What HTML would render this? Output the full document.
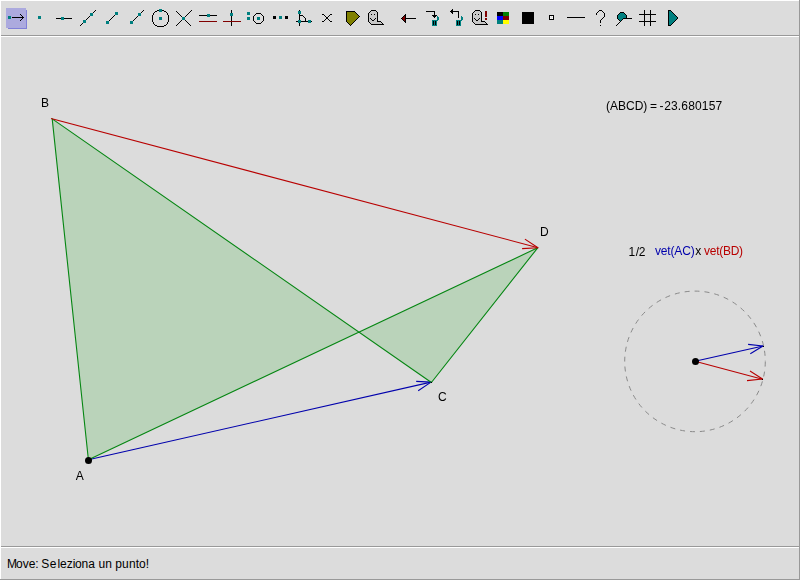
<!DOCTYPE html>
<html><head><meta charset="utf-8">
<style>
html,body{margin:0;padding:0;}
body{width:800px;height:580px;overflow:hidden;background:#dcdcdc;font-family:"Liberation Sans",sans-serif;font-size:12px;color:#000;position:relative;}
#frame{position:absolute;left:0;top:0;width:800px;height:580px;}
svg text{font-family:"Liberation Sans",sans-serif;font-size:12px;}
</style></head><body>
<svg id="frame" width="800" height="580" viewBox="0 0 800 580">
<rect x="0" y="0" width="800" height="580" fill="#dcdcdc"/>
<!-- borders -->
<g shape-rendering="crispEdges">
<rect x="0" y="0" width="799" height="1" fill="#fff"/>
<rect x="0" y="0" width="1" height="579" fill="#fff"/>
<rect x="799" y="0" width="1" height="580" fill="#999"/>
<rect x="0" y="579" width="800" height="1" fill="#999"/>
<rect x="1" y="35" width="798" height="1" fill="#999"/>
<rect x="1" y="36" width="798" height="1" fill="#fff"/>
<rect x="1" y="546" width="798" height="1" fill="#999"/>
<rect x="1" y="547" width="798" height="1" fill="#fff"/>
</g>
<!-- toolbar icons -->
<g id="toolbar" shape-rendering="crispEdges">
<rect x="8" y="10" width="19" height="19" fill="#8080d8"/><rect x="6" y="8" width="20" height="20" fill="#acaade"/>
<rect x="8" y="16" width="3" height="3" fill="#008080"/><rect x="12" y="17" width="12" height="1" fill="#000"/><rect x="20" y="14" width="1" height="1" fill="#000"/><rect x="21" y="15" width="1" height="1" fill="#000"/><rect x="22" y="16" width="1" height="1" fill="#000"/><rect x="22" y="18" width="1" height="1" fill="#000"/><rect x="21" y="19" width="1" height="1" fill="#000"/><rect x="20" y="20" width="1" height="1" fill="#000"/>
<rect x="38" y="16" width="3" height="3" fill="#008080"/>
<rect x="56" y="18" width="16" height="1" fill="#000"/><rect x="61" y="17" width="3" height="3" fill="#008080"/>
<line x1="80" y1="26" x2="96" y2="10" stroke="#000" stroke-width="1"/><rect x="83" y="20" width="3" height="3" fill="#008080"/><rect x="90" y="13" width="3" height="3" fill="#008080"/>
<line x1="107.5" y1="22.5" x2="116.5" y2="13.5" stroke="#000" stroke-width="1"/><rect x="106" y="21" width="3" height="3" fill="#008080"/><rect x="115" y="12" width="3" height="3" fill="#008080"/>
<line x1="131.5" y1="22.5" x2="144" y2="10" stroke="#000" stroke-width="1"/><rect x="130" y="21" width="3" height="3" fill="#008080"/><rect x="138" y="13" width="3" height="3" fill="#008080"/>
<rect x="152" y="15" width="1" height="1" fill="#000"/><rect x="152" y="16" width="1" height="1" fill="#000"/><rect x="152" y="17" width="1" height="1" fill="#000"/><rect x="152" y="18" width="1" height="1" fill="#000"/><rect x="152" y="19" width="1" height="1" fill="#000"/><rect x="152" y="20" width="1" height="1" fill="#000"/><rect x="152" y="21" width="1" height="1" fill="#000"/><rect x="153" y="13" width="1" height="1" fill="#000"/><rect x="153" y="14" width="1" height="1" fill="#000"/><rect x="153" y="22" width="1" height="1" fill="#000"/><rect x="153" y="23" width="1" height="1" fill="#000"/><rect x="154" y="12" width="1" height="1" fill="#000"/><rect x="154" y="24" width="1" height="1" fill="#000"/><rect x="155" y="11" width="1" height="1" fill="#000"/><rect x="155" y="25" width="1" height="1" fill="#000"/><rect x="156" y="11" width="1" height="1" fill="#000"/><rect x="156" y="25" width="1" height="1" fill="#000"/><rect x="157" y="10" width="1" height="1" fill="#000"/><rect x="157" y="26" width="1" height="1" fill="#000"/><rect x="158" y="10" width="1" height="1" fill="#000"/><rect x="158" y="26" width="1" height="1" fill="#000"/><rect x="159" y="10" width="1" height="1" fill="#000"/><rect x="159" y="26" width="1" height="1" fill="#000"/><rect x="160" y="10" width="1" height="1" fill="#000"/><rect x="160" y="26" width="1" height="1" fill="#000"/><rect x="161" y="10" width="1" height="1" fill="#000"/><rect x="161" y="26" width="1" height="1" fill="#000"/><rect x="162" y="10" width="1" height="1" fill="#000"/><rect x="162" y="26" width="1" height="1" fill="#000"/><rect x="163" y="10" width="1" height="1" fill="#000"/><rect x="163" y="26" width="1" height="1" fill="#000"/><rect x="164" y="11" width="1" height="1" fill="#000"/><rect x="164" y="25" width="1" height="1" fill="#000"/><rect x="165" y="11" width="1" height="1" fill="#000"/><rect x="165" y="25" width="1" height="1" fill="#000"/><rect x="166" y="12" width="1" height="1" fill="#000"/><rect x="166" y="24" width="1" height="1" fill="#000"/><rect x="167" y="13" width="1" height="1" fill="#000"/><rect x="167" y="14" width="1" height="1" fill="#000"/><rect x="167" y="22" width="1" height="1" fill="#000"/><rect x="167" y="23" width="1" height="1" fill="#000"/><rect x="168" y="15" width="1" height="1" fill="#000"/><rect x="168" y="16" width="1" height="1" fill="#000"/><rect x="168" y="17" width="1" height="1" fill="#000"/><rect x="168" y="18" width="1" height="1" fill="#000"/><rect x="168" y="19" width="1" height="1" fill="#000"/><rect x="168" y="20" width="1" height="1" fill="#000"/><rect x="168" y="21" width="1" height="1" fill="#000"/><rect x="159" y="9" width="3" height="3" fill="#008080"/><rect x="159" y="17" width="3" height="3" fill="#008080"/>
<line x1="176" y1="11" x2="191" y2="26" stroke="#000" stroke-width="1"/><line x1="176" y1="26" x2="192" y2="10" stroke="#000" stroke-width="1"/><rect x="182" y="17" width="3" height="3" fill="#008080"/>
<rect x="199" y="15" width="18" height="1" fill="#000"/><rect x="207" y="14" width="3" height="3" fill="#008080"/><rect x="199" y="21" width="18" height="1" fill="#800000"/>
<rect x="231" y="10" width="1" height="16" fill="#000"/><rect x="230" y="13" width="3" height="3" fill="#008080"/><rect x="223" y="21" width="18" height="1" fill="#800000"/>
<rect x="247" y="12" width="3" height="3" fill="#008080"/><rect x="247" y="17" width="3" height="3" fill="#008080"/><rect x="253" y="16" width="1" height="1" fill="#000"/><rect x="253" y="17" width="1" height="1" fill="#000"/><rect x="253" y="18" width="1" height="1" fill="#000"/><rect x="253" y="19" width="1" height="1" fill="#000"/><rect x="253" y="20" width="1" height="1" fill="#000"/><rect x="254" y="15" width="1" height="1" fill="#000"/><rect x="254" y="21" width="1" height="1" fill="#000"/><rect x="255" y="14" width="1" height="1" fill="#000"/><rect x="255" y="22" width="1" height="1" fill="#000"/><rect x="256" y="13" width="1" height="1" fill="#000"/><rect x="256" y="23" width="1" height="1" fill="#000"/><rect x="257" y="13" width="1" height="1" fill="#000"/><rect x="257" y="23" width="1" height="1" fill="#000"/><rect x="258" y="13" width="1" height="1" fill="#000"/><rect x="258" y="23" width="1" height="1" fill="#000"/><rect x="259" y="13" width="1" height="1" fill="#000"/><rect x="259" y="23" width="1" height="1" fill="#000"/><rect x="260" y="13" width="1" height="1" fill="#000"/><rect x="260" y="23" width="1" height="1" fill="#000"/><rect x="261" y="14" width="1" height="1" fill="#000"/><rect x="261" y="22" width="1" height="1" fill="#000"/><rect x="262" y="15" width="1" height="1" fill="#000"/><rect x="262" y="21" width="1" height="1" fill="#000"/><rect x="263" y="16" width="1" height="1" fill="#000"/><rect x="263" y="17" width="1" height="1" fill="#000"/><rect x="263" y="18" width="1" height="1" fill="#000"/><rect x="263" y="19" width="1" height="1" fill="#000"/><rect x="263" y="20" width="1" height="1" fill="#000"/><rect x="257" y="17" width="3" height="3" fill="#008080"/>
<rect x="273" y="16" width="3" height="3" fill="#000"/><rect x="279" y="16" width="3" height="3" fill="#008080"/><rect x="285" y="16" width="3" height="3" fill="#000"/>
<rect x="299" y="10" width="1" height="16" fill="#000"/><rect x="296" y="21" width="16" height="1" fill="#000"/><rect x="300" y="15" width="1" height="1" fill="#000"/><rect x="301" y="15" width="1" height="1" fill="#000"/><rect x="302" y="15" width="1" height="1" fill="#000"/><rect x="303" y="16" width="1" height="1" fill="#000"/><rect x="304" y="17" width="1" height="1" fill="#000"/><rect x="305" y="18" width="1" height="1" fill="#000"/><rect x="305" y="19" width="1" height="1" fill="#000"/><rect x="305" y="20" width="1" height="1" fill="#000"/><rect x="298" y="11" width="3" height="3" fill="#008080"/><rect x="298" y="20" width="3" height="3" fill="#008080"/><rect x="308" y="20" width="3" height="3" fill="#008080"/>
<rect x="322" y="14" width="1" height="1" fill="#000"/><rect x="323" y="14" width="1" height="1" fill="#000"/><rect x="324" y="15" width="1" height="1" fill="#000"/><rect x="325" y="16" width="1" height="1" fill="#000"/><rect x="331" y="14" width="1" height="1" fill="#000"/><rect x="330" y="14" width="1" height="1" fill="#000"/><rect x="329" y="15" width="1" height="1" fill="#000"/><rect x="328" y="16" width="1" height="1" fill="#000"/><rect x="322" y="21" width="1" height="1" fill="#000"/><rect x="323" y="21" width="1" height="1" fill="#000"/><rect x="324" y="20" width="1" height="1" fill="#000"/><rect x="325" y="19" width="1" height="1" fill="#000"/><rect x="331" y="21" width="1" height="1" fill="#000"/><rect x="330" y="21" width="1" height="1" fill="#000"/><rect x="329" y="20" width="1" height="1" fill="#000"/><rect x="328" y="19" width="1" height="1" fill="#000"/><rect x="326" y="17" width="1" height="1" fill="#000"/><rect x="327" y="17" width="1" height="1" fill="#000"/><rect x="326" y="18" width="1" height="1" fill="#000"/><rect x="327" y="18" width="1" height="1" fill="#000"/>
<polygon points="346.5,11.5 354.5,11.5 359.5,16.5 350.5,25.5 346.5,21.5" fill="#808000" stroke="#000"/>
<g transform="translate(0,0)"><path d="M371.5,10.5 H375.5 L377.5,12.5 V21.5 H380.5 L383.5,24.5 H371.5 L368.5,21.5 V13.5 Z" fill="#c8c8c8" stroke="#000"/><rect x="371" y="14" width="1" height="1" fill="#000"/><rect x="374" y="14" width="1" height="1" fill="#000"/><path d="M370.5,18.5 L372.5,20.5 H373.5 L375.5,18.5" fill="none" stroke="#000"/></g>
<rect x="405" y="18" width="11" height="1" fill="#000"/><polygon points="401.5,18.5 405.5,14.5 405.5,22.5" fill="#800000" stroke="#000"/>
<rect x="426" y="11" width="9" height="1" fill="#000"/><rect x="434" y="11" width="1" height="5" fill="#000"/><polygon points="432,15 437,15 434.5,18" fill="#000"/><rect x="432" y="20" width="5" height="6" fill="#008080"/><rect x="433" y="21" width="1" height="4" fill="#000"/><rect x="435" y="21" width="1" height="4" fill="#000"/><path d="M437,16.5 Q439.5,18.2 437,20.5" fill="none" stroke="#008080" stroke-width="1.6"/>
<rect x="451" y="11" width="8" height="1" fill="#000"/><rect x="458" y="11" width="1" height="7" fill="#000"/><polygon points="453,9 453,14 450,11.5" fill="#000"/><rect x="456" y="20" width="5" height="6" fill="#008080"/><rect x="457" y="21" width="1" height="4" fill="#000"/><rect x="459" y="21" width="1" height="4" fill="#000"/><path d="M461,16.5 Q463.5,18.2 461,20.5" fill="none" stroke="#008080" stroke-width="1.6"/>
<g transform="translate(104,0)"><path d="M371.5,10.5 H375.5 L377.5,12.5 V21.5 H380.5 L383.5,24.5 H371.5 L368.5,21.5 V13.5 Z" fill="#c8c8c8" stroke="#000"/><rect x="371" y="14" width="1" height="1" fill="#000"/><rect x="374" y="14" width="1" height="1" fill="#000"/><path d="M370.5,18.5 L372.5,20.5 H373.5 L375.5,18.5" fill="none" stroke="#000"/></g><rect x="485" y="11" width="2" height="6" fill="#800000"/><rect x="485" y="18" width="2" height="2" fill="#800000"/>
<rect x="497" y="12" width="6" height="4" fill="#000"/><rect x="503" y="12" width="6" height="4" fill="#008000"/><rect x="497" y="16" width="6" height="4" fill="#0000ff"/><rect x="503" y="16" width="6" height="4" fill="#800000"/><rect x="497" y="20" width="6" height="4" fill="#008080"/><rect x="503" y="20" width="6" height="4" fill="#ffff00"/>
<rect x="522" y="12" width="12" height="12" fill="#000"/>
<rect x="549" y="15" width="5" height="5" fill="#000"/><rect x="550" y="16" width="3" height="3" fill="#e4e4e4"/><rect x="550" y="16" width="1" height="1" fill="#fff"/><rect x="552" y="16" width="1" height="1" fill="#fff"/><rect x="550" y="18" width="1" height="1" fill="#fff"/><rect x="552" y="18" width="1" height="1" fill="#fff"/>
<rect x="567" y="17" width="18" height="1" fill="#000"/>
<path d="M596.5,15 V13.5 L599.5,10.5 H601.5 L604.5,13.5 V16.5 L600.5,20.5 V23" fill="none" stroke="#000"/><rect x="600" y="25" width="1" height="1" fill="#000"/>
<polygon points="617.5,15.5 620.5,12.5 623.5,12.5 626.5,15.5 626.5,18.5 623.5,18.5 620.5,21.5 617.5,18.5" fill="#008080"/><path d="M620.5,21.5 L617.5,18.5 V15.5 L620.5,12.5 H623.5 L626.5,15.5 V18.5" fill="none" stroke="#000"/><rect x="623" y="18" width="9" height="1" fill="#000"/><line x1="623.5" y1="18.5" x2="616" y2="26" stroke="#000" stroke-width="1"/>
<rect x="644" y="10" width="1" height="16" fill="#000"/><rect x="650" y="10" width="1" height="16" fill="#000"/><rect x="639" y="14" width="17" height="1" fill="#000"/><rect x="639" y="21" width="17" height="1" fill="#000"/>
<polygon points="668.5,10.5 670.5,10.5 677.5,17.5 677.5,18.5 670.5,25.5 668.5,25.5" fill="#008080" stroke="#000"/>
</g>
<!-- geometry -->
<g id="geo" fill="none" stroke-width="1.1" stroke-linejoin="round">
<polygon points="88.4,459.8 52.2,118.9 431.4,382.5 537.7,247.8" fill="#bad3ba" stroke="none"/>
<line x1="88.4" y1="459.8" x2="431" y2="382.1" stroke="#0000ac"/>
<polyline points="416.2,381.4 431,382.1 418.2,390.7" stroke="#0000ac"/>
<polygon points="88.4,459.8 52.2,118.9 431.4,382.5 537.7,247.8" fill="none" stroke="#058612" stroke-linejoin="round"/>
<line x1="51" y1="118.5" x2="538" y2="247.7" stroke="#b80000"/>
<polyline points="524.9,239.1 538,247.7 522.1,248.6" stroke="#b80000"/>
<circle cx="88.5" cy="460.5" r="3.5" fill="#000" stroke="none"/>
<rect x="431" y="382" width="1" height="1" fill="#000"/>
<circle cx="695" cy="361.4" r="70.3" stroke="#8a8a8a" stroke-width="1" stroke-dasharray="5 5" stroke-dashoffset="-0.3"/>
<line x1="695" y1="361.3" x2="763" y2="346" stroke="#0000ac"/>
<polyline points="748.1,344.4 763,346 750.3,353.7" stroke="#0000ac"/>
<line x1="695" y1="361.3" x2="762.5" y2="379.3" stroke="#b80000"/>
<polyline points="750,371 762.5,379 747,380.6" stroke="#b80000"/>
<circle cx="695.5" cy="361.5" r="3.5" fill="#000" stroke="none"/>
<rect x="763" y="346" width="1" height="1" fill="#000"/>
<rect x="762" y="379" width="1" height="1" fill="#000"/>
</g>
<text y="568" fill="#000"><tspan x="7">M</tspan><tspan x="16">ove:</tspan> <tspan x="41.3">S</tspan><tspan x="49.8">e</tspan><tspan x="57.4">lezi</tspan><tspan x="74.9">ona</tspan> <tspan x="98.6">un</tspan> <tspan x="115.3">pu</tspan><tspan x="129.08">nto!</tspan></text>
</svg>
<svg id="labels" width="800" height="580" viewBox="0 0 800 580" style="position:absolute;left:0;top:0;will-change:transform;">
<g fill="#000">
<text x="41" y="107">B</text>
<text x="75.7" y="480">A</text>
<text x="438" y="401">C</text>
<text x="540" y="236">D</text>
<text y="110"><tspan x="606">(ABCD)</tspan> <tspan x="649.9">=</tspan> <tspan x="659.6">-</tspan><tspan x="664.2" letter-spacing="0.16">23.680157</tspan></text>
<text y="256"><tspan x="628.5">1</tspan><tspan x="635.8">/</tspan><tspan x="638.7">2</tspan></text>
<text x="655" y="255" fill="#0000ac" letter-spacing="-0.17">vet(AC)</text>
<text x="695.2" y="255">x</text>
<text x="704" y="255" fill="#b80000" letter-spacing="-0.27">vet(BD)</text>
</g>
</svg>
</body></html>
